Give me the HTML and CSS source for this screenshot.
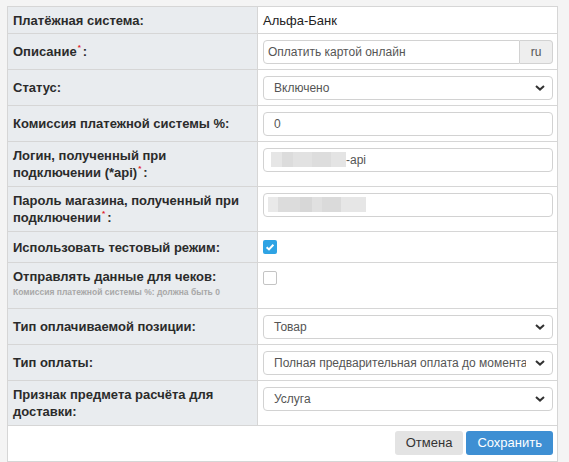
FILE: index.html
```html
<!DOCTYPE html>
<html lang="ru">
<head>
<meta charset="utf-8">
<title>Платёжная система</title>
<link rel="stylesheet" href="styles.css">
</head>
<body>
<table class="form-table">
  <colgroup><col class="col-label"><col class="col-value"></colgroup>
  <tbody>
    <tr class="row-text">
      <td class="label">Платёжная система:</td>
      <td class="value">Альфа-Банк</td>
    </tr>
    <tr>
      <td class="label">Описание<sup class="req">*</sup>:</td>
      <td class="value">
        <div class="input-group">
          <span class="control grp-input">Оплатить картой онлайн</span>
          <span class="addon">ru</span>
        </div>
      </td>
    </tr>
    <tr>
      <td class="label">Статус:</td>
      <td class="value">
        <div class="control select">Включено<svg class="chev" viewBox="0 0 10 6" width="10" height="6"><path d="M1 1 L5 4.6 L9 1" fill="none" stroke="#333" stroke-width="2"/></svg></div>
      </td>
    </tr>
    <tr>
      <td class="label">Комиссия платежной системы %:</td>
      <td class="value"><div class="control">0</div></td>
    </tr>
    <tr>
      <td class="label">Логин, полученный при подключении (*api)<sup class="req">*</sup>:</td>
      <td class="value"><div class="control blur-login"><span class="blur b-login"></span>-api</div></td>
    </tr>
    <tr>
      <td class="label">Пароль магазина, полученный при подключении<sup class="req">*</sup>:</td>
      <td class="value"><div class="control blur-pass"><span class="blur b-pass"></span></div></td>
    </tr>
    <tr>
      <td class="label">Использовать тестовый режим:</td>
      <td class="value"><span class="check checked"><svg viewBox="0 0 14 14" width="14" height="14"><path d="M3.6 7.2 L6 9.4 L10.4 4.8" fill="none" stroke="#fff" stroke-width="2"/></svg></span></td>
    </tr>
    <tr>
      <td class="label">Отправлять данные для чеков:<span class="hint">Комиссия платежной системы %: должна быть 0</span></td>
      <td class="value"><span class="check"></span></td>
    </tr>
    <tr>
      <td class="label">Тип оплачиваемой позиции:</td>
      <td class="value">
        <div class="control select">Товар<svg class="chev" viewBox="0 0 10 6" width="10" height="6"><path d="M1 1 L5 4.6 L9 1" fill="none" stroke="#333" stroke-width="2"/></svg></div>
      </td>
    </tr>
    <tr>
      <td class="label">Тип оплаты:</td>
      <td class="value">
        <div class="control select"><span class="clip">Полная предварительная оплата до момента передачи предмета расчёта</span><svg class="chev" viewBox="0 0 10 6" width="10" height="6"><path d="M1 1 L5 4.6 L9 1" fill="none" stroke="#333" stroke-width="2"/></svg></div>
      </td>
    </tr>
    <tr>
      <td class="label">Признак предмета расчёта для доставки:</td>
      <td class="value">
        <div class="control select">Услуга<svg class="chev" viewBox="0 0 10 6" width="10" height="6"><path d="M1 1 L5 4.6 L9 1" fill="none" stroke="#333" stroke-width="2"/></svg></div>
      </td>
    </tr>
    <tr>
      <td class="footer" colspan="2">
        <div class="actions">
          <button class="btn btn-cancel">Отмена</button>
          <button class="btn btn-save">Сохранить</button>
        </div>
      </td>
    </tr>
  </tbody>
</table>
</body>
</html>
```
FILE: styles.css
```css
html, body {
  margin: 0;
  background: #f4f4f4;
}
body {
  padding: 6px 0 0 7px;
  font-family: "Liberation Sans", Arial, sans-serif;
  font-size: 13px;
  line-height: 17px;
  color: #333;
}
.form-table {
  width: 550px;
  border-collapse: collapse;
  table-layout: fixed;
  background: #fff;
  border: 1px solid #d6d6d6;
}
.col-label { width: 250px; }
.col-value { width: 300px; }
.form-table td {
  border: 1px solid #d6d6d6;
  padding: 5px 4px 5px 5px;
}
.label {
  background: #e9ecef;
  font-weight: bold;
  color: #2b2b2b;
  vertical-align: middle;
}
.value {
  background: #fff;
  color: #222;
  vertical-align: top;
}
.form-table td.value { padding-top: 6px; }
.form-table .row-text td { padding: 5px 4px 4px 5px; }
.req {
  color: #e0202a;
  font-size: 8px;
  line-height: 0;
  vertical-align: 6px;
  margin-left: 1px;
  margin-right: 2px;
}
.control {
  position: relative;
  display: block;
  box-sizing: border-box;
  height: 24px;
  padding: 0 10px;
  border: 1px solid #d2d2d2;
  border-radius: 4px;
  background: #fff;
  color: #555;
  font-size: 12px;
  line-height: 22px;
  white-space: nowrap;
  overflow: hidden;
}
.select { padding-right: 26px; }
.clip { display: block; overflow: hidden; }
.chev {
  position: absolute;
  right: 7px;
  top: 8px;
}
.input-group { display: flex; }
.input-group .grp-input {
  flex: 1;
  padding-left: 4px;
  border-radius: 4px 0 0 4px;
}
.addon {
  box-sizing: border-box;
  width: 33px;
  height: 24px;
  line-height: 22px;
  font-size: 12px;
  text-align: center;
  background: #eee;
  border: 1px solid #d2d2d2;
  border-left: none;
  border-radius: 0 4px 4px 0;
  color: #555;
}
.blur-login { padding-left: 7px; }
.blur-pass { padding-left: 4px; }
.blur {
  display: inline-block;
  vertical-align: top;
  margin-top: 3px;
  height: 15px;
}
.b-login {
  width: 75px;
  background: linear-gradient(90deg, #e6e6e6 0 15%, #dcdcdc 15% 30%, #e2e2e2 30% 55%, #dddddd 55% 80%, #e4e4e4 80% 100%);
}
.b-pass {
  width: 98px;
  background: linear-gradient(90deg, #e9e9e9 0 10%, #dcdcdc 10% 33%, #d7d7d7 33% 45%, #e0e0e0 45% 55%, #dadada 55% 75%, #e6e6e6 75% 100%);
}
.check {
  display: block;
  box-sizing: border-box;
  width: 14px;
  height: 14px;
  margin: 2px 0 3px;
  border: 1px solid #c4c4c4;
  border-radius: 2px;
  background: #fff;
}
.check.checked {
  border: none;
  background: #2ea3e4;
}
.check svg { display: block; }
.hint {
  display: block;
  font-size: 8.5px;
  line-height: 14px;
  color: #a8a8a8;
  padding-bottom: 4px;
}
.form-table td.footer {
  background: #fff;
  padding: 5px 4px 6px 5px;
}
.actions {
  display: flex;
  justify-content: flex-end;
  gap: 3px;
}
.btn {
  height: 24px;
  padding: 0 11px;
  border: none;
  border-radius: 3px;
  font-family: "Liberation Sans", Arial, sans-serif;
  font-size: 13px;
  line-height: 24px;
  cursor: pointer;
}
.btn-cancel { background: #e3e3e3; color: #333; }
.btn-save { background: #3e8fd3; color: #fff; }
```
